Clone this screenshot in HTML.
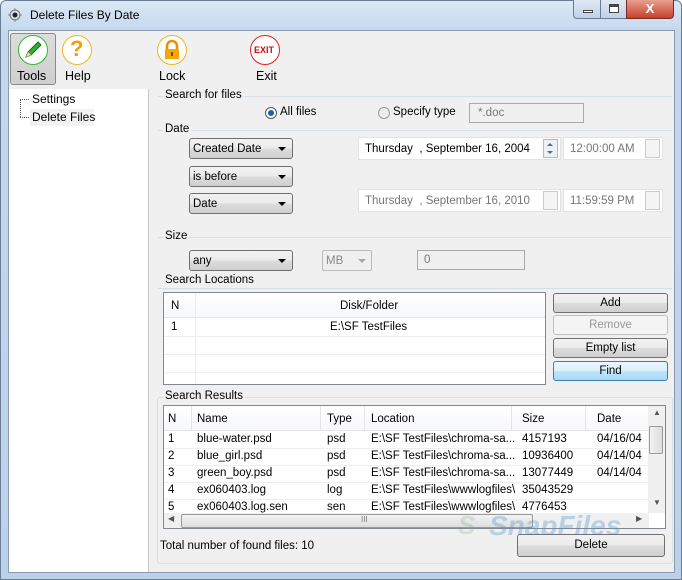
<!DOCTYPE html>
<html><head><meta charset="utf-8"><style>
*{box-sizing:border-box;margin:0;padding:0}
body{width:682px;height:580px;overflow:hidden;font-family:"Liberation Sans",sans-serif;font-size:11.5px;color:#000;background:#fff;position:relative}
.a{position:absolute}
.frame{left:0;top:0;width:682px;height:580px;background:linear-gradient(180deg,#dbe8f5 0,#c4d8ee 30px,#bcd2ea 100%);border:1px solid #6a7d94;border-radius:6px 6px 0 0}
.client{left:8px;top:30px;width:667px;height:543px;background:#f0f0f0;border:1px solid #8a9bb0}
.t{position:absolute;white-space:nowrap}
.grp{position:absolute;border:1px solid #d5dfe5;border-radius:3px}
.lbl{position:absolute;background:#f0f0f0;padding:0 2px;white-space:nowrap}
.hl{position:absolute;height:1px;background:#d5dfe5}
.combo{position:absolute;height:21px;border:1px solid #707070;border-radius:3px;background:linear-gradient(#f2f2f2,#ebebeb 50%,#dddddd 50%,#cfcfcf);padding:4px 3px 0;white-space:nowrap}
.combo:after{content:"";position:absolute;right:6px;top:8px;border-left:4px solid transparent;border-right:4px solid transparent;border-top:4px solid #000}
.field{position:absolute;background:#fff;border:1px solid #e3e3e3;padding:5px 6px 0;white-space:nowrap}
.spin{position:absolute;right:2px;top:1px;width:15px;height:19px;border:1px solid #b8b8b8;background:#eef2f6}
.btn{position:absolute;height:20px;border:1px solid #707070;border-radius:3px;background:linear-gradient(#f2f2f2,#ebebeb 50%,#dddddd 50%,#cfcfcf);text-align:center;line-height:18px}
.circ{position:absolute;width:30px;height:30px;border-radius:50%;border:1px solid;background:#fff}
</style></head><body>
<div class="a frame"></div>
<svg class="a" style="left:8px;top:7px" width="16" height="16"><circle cx="7" cy="8" r="5" fill="none" stroke="#777" stroke-width="1"/><circle cx="7" cy="8" r="2.5" fill="#222"/><path d="M7 1v3M7 12v3M0 8h3M11 8h3" stroke="#888"/></svg>
<div class="t" style="left:30px;top:8px;font-size:12px">Delete Files By Date</div>
<div class="a" style="left:573px;top:0;width:28px;height:19px;border:1px solid #6a7d94;border-top:0;border-radius:0 0 0 4px;background:linear-gradient(#dfe9f5,#c0d0e4)"><div class="a" style="left:9px;top:10px;width:10px;height:3px;background:#fff;border:1px solid #444"></div></div>
<div class="a" style="left:600px;top:0;width:27px;height:19px;border:1px solid #6a7d94;border-top:0;background:linear-gradient(#dfe9f5,#c0d0e4)"><div class="a" style="left:8px;top:4px;width:10px;height:9px;border:1px solid #444;border-top-width:3px;background:#fff"></div></div>
<div class="a" style="left:626px;top:0;width:48px;height:19px;border:1px solid #7a2a20;border-top:0;border-radius:0 0 4px 0;background:linear-gradient(#e8a090,#c8402c);color:#fff;font-weight:bold;text-align:center;line-height:18px;font-size:13px">X</div>
<div class="a client"></div>
<div class="a" style="left:10px;top:33px;width:46px;height:52px;border:1px solid #8a8a8a;border-radius:3px;background:linear-gradient(#dcdcdc,#cfcfcf)"></div>
<div class="circ" style="left:18px;top:35px;border-color:#2eb82e"></div>
<svg class="a" style="left:22px;top:39px" width="22" height="22"><path d="M4 18l2-5L16 3l3 3L9 16z" fill="#2fae2f" stroke="#1b6e1b"/><path d="M4 18l2-5 3 3z" fill="#e8d8a8"/></svg>
<div class="t" style="left:17px;top:69px;font-size:12.5px">Tools</div>
<div class="circ" style="left:62px;top:35px;border-color:#e8b820"></div>
<div class="t" style="left:70px;top:36px;font-size:22px;font-weight:bold;color:#f0a000">?</div>
<div class="t" style="left:65px;top:69px;font-size:12.5px">Help</div>
<div class="circ" style="left:157px;top:35px;border-color:#e8b820"></div>
<svg class="a" style="left:162px;top:39px" width="20" height="22"><path d="M5 10V7a5 5 0 0 1 10 0v3" fill="none" stroke="#e89000" stroke-width="2.5"/><rect x="3" y="10" width="14" height="10" fill="#f4a800"/><rect x="9" y="13" width="2" height="4" fill="#7a4a00"/></svg>
<div class="t" style="left:159px;top:69px;font-size:12.5px">Lock</div>
<div class="circ" style="left:250px;top:35px;border-color:#e02020"></div>
<div class="t" style="left:254px;top:45px;font-size:9px;font-weight:bold;color:#c01010">EXIT</div>
<div class="t" style="left:256px;top:69px;font-size:12.5px">Exit</div>
<div class="a" style="left:9px;top:89px;width:140px;height:483px;background:#fff;border-right:1px solid #c8c8c8"></div>
<div class="a" style="left:20px;top:99px;height:18px;border-left:1px dotted #555"></div>
<div class="a" style="left:20px;top:99px;width:9px;border-top:1px dotted #555"></div>
<div class="a" style="left:20px;top:117px;width:9px;border-top:1px dotted #555"></div>
<div class="t" style="left:32px;top:92px;font-size:12px">Settings</div>
<div class="a" style="left:30px;top:109px;width:64px;height:17px;background:#f2f2f2"></div>
<div class="t" style="left:32px;top:110px;font-size:12px">Delete Files</div>
<div class="hl" style="left:158px;top:96px;width:514px"></div>
<div class="lbl" style="left:163px;top:89px">Search for files</div>
<div class="a" style="left:265px;top:107px;width:12px;height:12px;border-radius:50%;border:1px solid #555;background:#fff"><div class="a" style="left:2px;top:2px;width:6px;height:6px;border-radius:50%;background:#1c5fa8"></div></div>
<div class="t" style="left:280px;top:106px">All files</div>
<div class="a" style="left:378px;top:107px;width:12px;height:12px;border-radius:50%;border:1px solid #999;background:#eee"></div>
<div class="t" style="left:393px;top:106px">Specify type</div>
<div class="field" style="left:469px;top:103px;width:115px;height:20px;border-color:#aaa;background:#f0f0f0;color:#777;padding:3px 8px 0">*.doc</div>
<div class="hl" style="left:158px;top:130px;width:514px"></div>
<div class="lbl" style="left:163px;top:123px">Date</div>
<div class="combo" style="left:189px;top:138px;width:104px">Created Date</div>
<div class="combo" style="left:189px;top:166px;width:104px">is before</div>
<div class="combo" style="left:189px;top:193px;width:104px">Date</div>
<div class="field" style="left:358px;top:137px;width:203px;height:23px">Thursday&nbsp; , September 16, 2004<div class="spin"><div class="a" style="left:3px;top:3px;border:3px solid transparent;border-bottom:3px solid #3a6fa8;border-top:0"></div><div class="a" style="left:3px;top:11px;border:3px solid transparent;border-top:3px solid #3a6fa8;border-bottom:0"></div></div></div>
<div class="field" style="left:563px;top:137px;width:100px;height:23px;color:#777">12:00:00 AM<div class="spin" style="background:#f4f4f4;border-color:#ccc"></div></div>
<div class="field" style="left:358px;top:189px;width:203px;height:23px;color:#777">Thursday&nbsp; , September 16, 2010<div class="spin" style="background:#f4f4f4;border-color:#ccc"></div></div>
<div class="field" style="left:563px;top:189px;width:100px;height:23px;color:#777">11:59:59 PM<div class="spin" style="background:#f4f4f4;border-color:#ccc"></div></div>
<div class="hl" style="left:158px;top:237px;width:514px"></div>
<div class="lbl" style="left:163px;top:230px">Size</div>
<div class="combo" style="left:189px;top:250px;width:104px">any</div>
<div class="a" style="left:322px;top:250px;width:50px;height:21px;border:1px solid #bbb;border-radius:2px;color:#888;padding:4px 3px 0">MB<div class="a" style="left:35px;top:8px;border-left:4px solid transparent;border-right:4px solid transparent;border-top:4px solid #aaa"></div></div>
<div class="field" style="left:417px;top:250px;width:108px;height:20px;border-color:#aaa;background:#f0f0f0;color:#777;padding:3px 6px 0">0</div>
<div class="hl" style="left:158px;top:288px;width:514px"></div>
<div class="lbl" style="left:163px;top:274px">Search Locations</div>
<div class="a" style="left:163px;top:292px;width:383px;height:93px;background:#fff;border:1px solid #828790">
<div class="a" style="left:0;top:0;width:100%;height:25px;border-bottom:1px solid #e5e5e5;background:linear-gradient(#fff,#f7f8fa)"></div>
<div class="a" style="left:31px;top:0;width:1px;height:91px;background:#ececec"></div>
<div class="a" style="left:0;top:43px;width:100%;height:1px;background:#eee"></div>
<div class="a" style="left:0;top:61px;width:100%;height:1px;background:#eee"></div>
<div class="a" style="left:0;top:79px;width:100%;height:1px;background:#eee"></div>
<div class="t" style="left:7px;top:7px">N</div>
<div class="t" style="left:176px;top:7px">Disk/Folder</div>
<div class="t" style="left:7px;top:28px">1</div>
<div class="t" style="left:166px;top:28px">E:\SF TestFiles</div>
</div>
<div class="btn" style="left:553px;top:293px;width:115px">Add</div>
<div class="btn" style="left:553px;top:315px;width:115px;border-color:#c0c0c0;background:#f4f4f4;color:#999">Remove</div>
<div class="btn" style="left:553px;top:338px;width:115px">Empty list</div>
<div class="btn" style="left:553px;top:361px;width:115px;border-color:#3c7fb1;background:linear-gradient(#eaf6fd,#d9f0fc 50%,#bee6fd 50%,#a7d9f5)">Find</div>
<div class="grp" style="left:157px;top:397px;width:516px;height:167px"></div>
<div class="lbl" style="left:163px;top:390px">Search Results</div>
<div class="a" style="left:163px;top:405px;width:503px;height:124px;background:#fff;border:1px solid #828790;overflow:hidden">
<div class="a" style="left:0;top:0;width:485px;height:25px;background:linear-gradient(#fff,#f7f8fa);border-bottom:1px solid #e5e5e5"></div>
<div class="a" style="left:27px;top:0;width:1px;height:25px;background:#e5e5e5"></div>
<div class="a" style="left:156px;top:0;width:1px;height:25px;background:#e5e5e5"></div>
<div class="a" style="left:200px;top:0;width:1px;height:25px;background:#e5e5e5"></div>
<div class="a" style="left:347px;top:0;width:1px;height:25px;background:#e5e5e5"></div>
<div class="a" style="left:421px;top:0;width:1px;height:25px;background:#e5e5e5"></div>
<div class="t" style="left:4px;top:7px">N</div><div class="t" style="left:33px;top:7px">Name</div><div class="t" style="left:163px;top:7px">Type</div><div class="t" style="left:207px;top:7px">Location</div><div class="t" style="left:358px;top:7px">Size</div><div class="t" style="left:433px;top:7px">Date</div>
<div class="a" style="left:0;top:42px;width:485px;height:1px;background:#eee"></div>
<div class="a" style="left:0;top:59px;width:485px;height:1px;background:#eee"></div>
<div class="a" style="left:0;top:76px;width:485px;height:1px;background:#eee"></div>
<div class="a" style="left:0;top:93px;width:485px;height:1px;background:#eee"></div>
<div class="t" style="left:4px;top:27px">1</div><div class="t" style="left:33px;top:27px">blue-water.psd</div><div class="t" style="left:163px;top:27px">psd</div><div class="t" style="left:207px;top:27px">E:\SF TestFiles\chroma-sa...</div><div class="t" style="left:358px;top:27px">4157193</div><div class="t" style="left:433px;top:27px">04/16/04</div>
<div class="t" style="left:4px;top:44px">2</div><div class="t" style="left:33px;top:44px">blue_girl.psd</div><div class="t" style="left:163px;top:44px">psd</div><div class="t" style="left:207px;top:44px">E:\SF TestFiles\chroma-sa...</div><div class="t" style="left:358px;top:44px">10936400</div><div class="t" style="left:433px;top:44px">04/14/04</div>
<div class="t" style="left:4px;top:61px">3</div><div class="t" style="left:33px;top:61px">green_boy.psd</div><div class="t" style="left:163px;top:61px">psd</div><div class="t" style="left:207px;top:61px">E:\SF TestFiles\chroma-sa...</div><div class="t" style="left:358px;top:61px">13077449</div><div class="t" style="left:433px;top:61px">04/14/04</div>
<div class="t" style="left:4px;top:78px">4</div><div class="t" style="left:33px;top:78px">ex060403.log</div><div class="t" style="left:163px;top:78px">log</div><div class="t" style="left:207px;top:78px">E:\SF TestFiles\wwwlogfiles\</div><div class="t" style="left:358px;top:78px">35043529</div>
<div class="t" style="left:4px;top:95px">5</div><div class="t" style="left:33px;top:95px">ex060403.log.sen</div><div class="t" style="left:163px;top:95px">sen</div><div class="t" style="left:207px;top:95px">E:\SF TestFiles\wwwlogfiles\</div><div class="t" style="left:358px;top:95px">4776453</div>
<div class="a" style="left:484px;top:0;width:17px;height:107px;background:#f0f0f0"><div class="a" style="left:1px;top:20px;width:14px;height:28px;border:1px solid #999;border-radius:2px;background:linear-gradient(90deg,#f3f3f3,#ddd)"></div><div class="t" style="left:5px;top:2px;font-size:8px;color:#555">▲</div><div class="t" style="left:5px;top:92px;font-size:8px;color:#555">▼</div></div>
<div class="a" style="left:0;top:107px;width:485px;height:16px;background:#f0f0f0"><div class="a" style="left:17px;top:1px;width:352px;height:14px;border:1px solid #999;border-radius:2px;background:linear-gradient(#f3f3f3,#ddd)"></div><div class="t" style="left:4px;top:1px;font-size:8px;color:#555">◀</div><div class="t" style="left:472px;top:1px;font-size:8px;color:#555">▶</div><div class="t" style="left:197px;top:2px;font-size:8px;color:#777">III</div></div>
</div>
<div class="t" style="left:458px;top:510px;font-size:26px;font-weight:bold;font-style:italic;color:rgba(120,170,120,0.25)">S</div>
<div class="t" style="left:489px;top:510px;font-size:28px;font-weight:bold;font-style:italic;color:rgba(80,150,210,0.35)">SnapFiles</div>
<div class="t" style="left:160px;top:540px">Total number of found files: 10</div>
<div class="btn" style="left:517px;top:534px;width:148px;height:23px;line-height:21px">Delete</div>
</body></html>
